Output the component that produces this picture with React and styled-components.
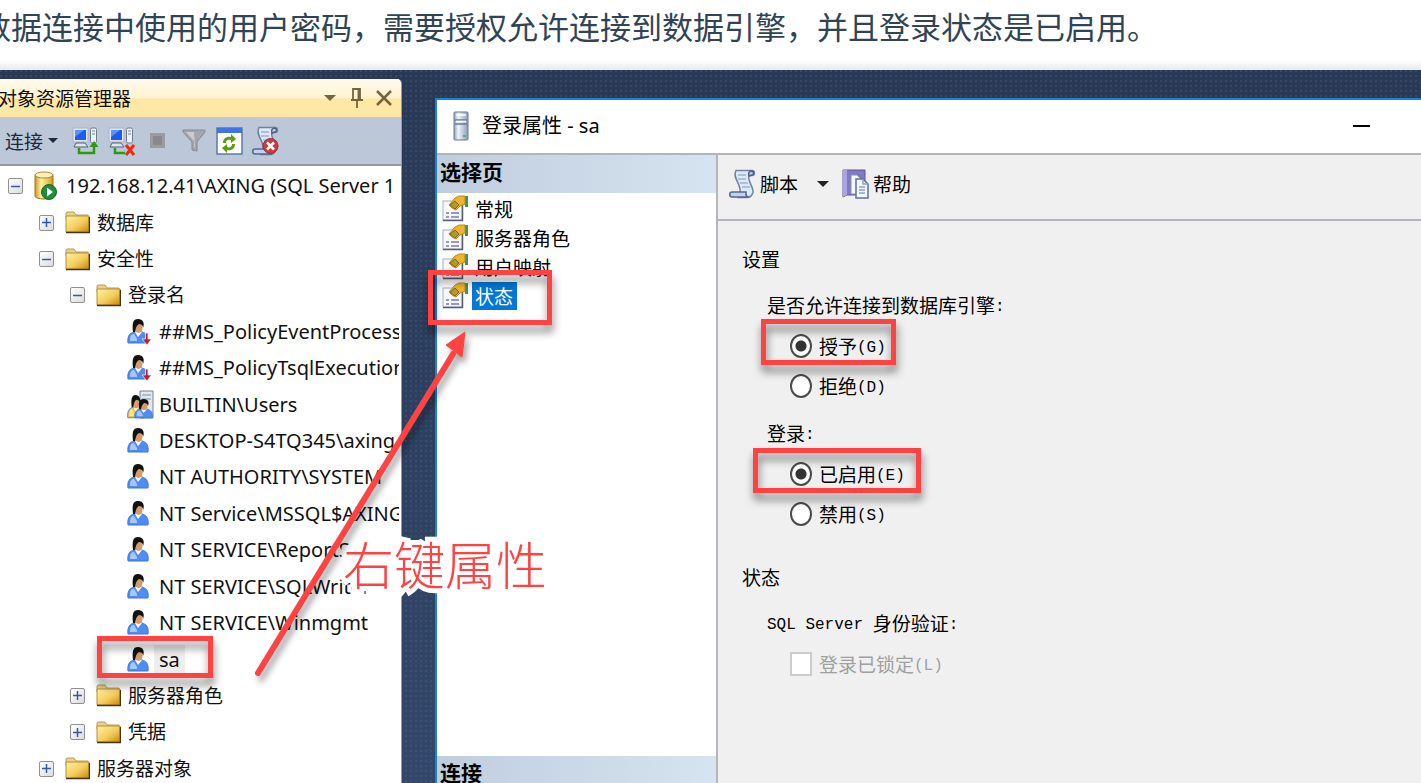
import React from 'react';
import styled, { createGlobalStyle } from 'styled-components';

const Global = createGlobalStyle`
  *, *::before, *::after { box-sizing: border-box; }
  body { margin: 0; background: #fff; overflow: hidden; }
  button { border: 0; padding: 0; background: none; font: inherit; color: inherit; }
  ul { list-style: none; margin: 0; padding: 0; }
  svg { display: block; flex: none; }
`;

const uiFont = '"Noto Sans", "Noto Sans CJK SC", sans-serif';
const cjkFont = '"Noto Sans CJK SC", sans-serif';

const Page = styled.div`
  height: 100vh;
  display: flex;
  flex-direction: column;
  overflow: hidden;
`;
const Intro = styled.p`
  margin: 0;
  height: 70px;
  flex: none;
  font: 31px/52px ${cjkFont};
  text-indent: -20px;
  color: #304455;
  white-space: nowrap;
  background: linear-gradient(#fff 60px, #e9eaec 70px);
`;
const Stage = styled.main`
  position: relative;
  flex: 1;
  min-height: 0;
  display: flex;
  gap: 33px;
  background:
    radial-gradient(circle at 1px 1px, rgba(90, 115, 160, 0.25) 1px, transparent 1px) 0 0 / 5px 5px,
    linear-gradient(#293955, #33476a);
  overflow: hidden;
`;

const Explorer = styled.section`
  width: 402px;
  flex: none;
  margin-top: 9px;
  display: flex;
  flex-direction: column;
  border-right: 1px solid #8e9bbc;
  border-radius: 0 5px 0 0;
  overflow: hidden;
  background: #fff;
  font: 20px/36px ${uiFont};
  color: #111;
`;
const ExplorerTitle = styled.header`
  height: 38px;
  display: flex;
  align-items: center;
  padding-right: 4px;
  background: linear-gradient(#fffaec 0, #fff3cf 50%, #ffe8a6 52%, #ffe8a6 100%);
`;
const PanelName = styled.h2`
  margin: 0 auto 0 -2px;
  font: 19px/38px ${cjkFont};
  color: #111;
`;
const TitleButton = styled.button`
  width: 27px;
  height: 26px;
  display: grid;
  place-items: center;
`;
const ExplorerTools = styled.div`
  height: 49px;
  flex: none;
  display: flex;
  align-items: center;
  gap: 9px;
  padding-left: 5px;
  background: #bcc7d8;
  border-bottom: 2px solid #8f98a6;
`;
const ConnectButton = styled.button`
  display: flex;
  align-items: center;
  gap: 5px;
  margin-right: 5px;
  font: 19px/28px ${cjkFont};
  color: #1b293e;
`;
const ToolButton = styled.button`
  width: 27px;
  height: 30px;
  display: grid;
  place-items: center;
`;
const Tree = styled.ul`
  height: 619px;
  flex: none;
  display: grid;
  grid-auto-rows: 1fr;
  margin: 2px 2px 0 0;
  overflow: hidden;
`;
const TreeRow = styled.li`
  display: flex;
  align-items: center;
  padding-left: ${p => 8 + p.$level * 31}px;
  white-space: nowrap;
`;
const Expander = styled.button`
  width: 15px;
  height: 16px;
  margin-right: 11px;
  flex: none;
  display: grid;
  place-items: center;
  border: 1px solid #919191;
  border-radius: 2px;
  background: linear-gradient(135deg, #fff, #dcdcdc);
  visibility: ${p => (p.$leaf ? 'hidden' : 'visible')};
`;
const TreeIcon = styled.span`
  width: 27px;
  flex: none;
`;
const TreeLabel = styled.span`
  font-size: ${p => (p.$cjk ? 19 : 20)}px;
  padding: 0 5px;
  line-height: 30px;
  background: ${p => (p.$marked ? '#eeeeee' : 'transparent')};
`;

const Dialog = styled.section`
  flex: 1;
  min-width: 0;
  margin-top: 28px;
  display: flex;
  flex-direction: column;
  border: solid #1883d7;
  border-width: 2px 0 0 2px;
  background: #fff;
  font: 19px/28px ${cjkFont};
  color: #000;
`;
const DialogTitle = styled.header`
  height: 55px;
  flex: none;
  display: flex;
  align-items: center;
  padding: 0 46px 2px 16px;
  gap: 13px;
  border-bottom: 2px solid #b4b4b8;
`;
const DialogName = styled.h1`
  flex: 1;
  margin: 0;
  font: 20px/28px ${uiFont};
`;
const DialogBody = styled.div`
  flex: 1;
  min-height: 0;
  display: flex;
`;
const Sidebar = styled.nav`
  width: 281px;
  flex: none;
  display: flex;
  flex-direction: column;
  border-right: 2px solid #b4b6bd;
`;
const SideHeading = styled.h2`
  margin: 0;
  padding-left: 3px;
  flex: none;
  height: ${p => (p.$cut ? 27 : 38)}px;
  font: bold 21px/32px ${cjkFont};
  overflow: hidden;
  background: linear-gradient(90deg, #bfcddd, #d6e4f1);
`;
const PageList = styled.ul`
  flex: 1;
  padding-top: 1px;
`;
const PageItem = styled.li`
  height: 29px;
`;
const PageButton = styled.button`
  height: 29px;
  display: flex;
  align-items: center;
  gap: 4px;
  padding-left: 5px;
`;
const PageLabel = styled.span`
  padding: 0 4px 0 3px;
  line-height: 28px;
  color: ${p => (p.$on ? '#fff' : '#000')};
  background: ${p => (p.$on ? '#0078d7' : 'transparent')};
`;
const Content = styled.div`
  flex: 1;
  min-width: 0;
  background: #f0f0f0;
`;
const ContentTools = styled.div`
  height: 66px;
  display: flex;
  align-items: center;
  padding: 0 0 6px 11px;
  border-bottom: 2px solid #b4b6bd;
`;
const ContentTool = styled.button`
  display: flex;
  align-items: center;
  gap: 4px;
`;
const MenuTool = styled.button`
  width: 44px;
  height: 30px;
  padding-left: 6px;
  display: grid;
  place-items: center;
`;
const Form = styled.form`
  padding: 19px 0 0 24px;
`;
const Section = styled.fieldset`
  border: 0;
  margin: 0 0 24px;
  padding: 0;
`;
const SectionName = styled.legend`
  padding: 0;
  line-height: 38px;
`;
const Group = styled.div`
  padding: 8px 0 0 25px;
`;
const GroupName = styled.div`
  height: 40px;
  line-height: 38px;
`;
const Choice = styled.label`
  display: flex;
  align-items: center;
  gap: 7px;
  height: 40px;
  padding-left: 23px;
  color: ${p => (p.$off ? '#a0a0a0' : '#000')};
`;
const Radio = styled.input.attrs({ type: 'radio' })`
  appearance: none;
  width: 22px;
  height: 24px;
  margin: 0;
  border: 2px solid #4a4a4a;
  border-radius: 50%;
  background: #fff;
  &:checked { background: radial-gradient(circle, #333 5px, #fff 6px); }
`;
const Tick = styled.input.attrs({ type: 'checkbox' })`
  appearance: none;
  width: 22px;
  height: 24px;
  margin: 0;
  border: 2px solid #ccc;
  background: #fff;
`;
const Latin = styled.span`
  font: 16px/20px "Liberation Mono", monospace;
  vertical-align: 2px;
`;

const Mark = styled.div`
  position: absolute;
  left: ${p => p.$x}px;
  top: ${p => p.$y}px;
  width: ${p => p.$w}px;
  height: ${p => p.$h}px;
  border: 5px solid #ff4343;
  filter: drop-shadow(1px 7px 4px rgba(0, 0, 0, 0.5));
  pointer-events: none;
`;
const Arrow = styled.svg`
  position: absolute;
  left: 240px;
  top: 250px;
  filter: drop-shadow(3px 6px 3px rgba(0, 0, 0, 0.35));
  pointer-events: none;
`;
const Note = styled.div`
  position: absolute;
  left: 343px;
  top: 460px;
  font: 300 51px/66px ${cjkFont};
  color: #ff4343;
  -webkit-text-stroke: 10px #fff;
  paint-order: stroke fill;
`;

const Caret = ({ w = 12, color = '#222' }) => (
  <svg width={w} height={w / 2} viewBox="0 0 12 6"><path d="M0 0h12L6 6z" fill={color} /></svg>
);
const Pin = () => (
  <svg width="14" height="22" viewBox="0 0 14 22" fill="none" stroke="#75633d" strokeWidth="1.800">
    <path d="M3 13V2h7v11M8.500 2v11M1 13h12M7 13v8" />
  </svg>
);
const Close = () => (
  <svg width="18" height="18" viewBox="0 0 18 18" stroke="#75633d" strokeWidth="2.500"><path d="M2 2l14 14M16 2L2 16" /></svg>
);
const Connect = ({ off }) => (
  <svg width="27" height="30" viewBox="0 0 27 30">
    <rect x="1" y="2" width="15" height="14" fill="#e2e6ee" stroke="#a9b3c4" />
    <rect x="3" y="4" width="11" height="10" fill="#1c5df0" />
    <path d="M3 4h9L3 11z" fill="#5a93ff" />
    <path d="M4 17h9l3 4H2z" fill="#dfe5ef" stroke="#53617c" />
    <rect x="18.500" y="2" width="6" height="15" rx="1.500" fill="#eef1f5" stroke="#6e7c92" />
    <path d="M20 5h3M20 8h3" stroke="#75839b" />
    {off ? (
      <g fill="none"><path d="M7 22v5h10" stroke="#2d9a12" strokeWidth="2.500" /><path d="M18 19l8 10M26 19l-8 10" stroke="#f22a12" strokeWidth="3" /></g>
    ) : (
      <g><path d="M7 22v5h15v-7" fill="none" stroke="#2d9a12" strokeWidth="2.500" /><path d="M17.500 21h9L22 15z" fill="#2d9a12" /></g>
    )}
  </svg>
);
const Stop = () => (
  <svg width="15" height="15" viewBox="0 0 15 15"><rect width="15" height="15" fill="#9a9c9f" /><rect x="3" y="3" width="9" height="9" fill="#87898c" /></svg>
);
const Filter = () => (
  <svg width="24" height="24" viewBox="0 0 24 24"><path d="M1 1h22v2l-8 10v9l-5-1v-8L1 3z" fill="#a3a7ad" stroke="#878b91" /><path d="M4 3h8l1 15h-1v-6z" fill="#c9ccd1" /></svg>
);
const Refresh = () => (
  <svg width="27" height="28" viewBox="0 0 27 28">
    <rect x="1" y="1" width="25" height="26" fill="#fff" stroke="#5778b4" strokeWidth="1.500" />
    <rect x="1" y="1" width="25" height="5" fill="#4174e0" />
    <path d="M7 16c0-5 4-7 8-6V7l5 5-5 4v-3c-3-1-5 0-5 3zM19 17c0 5-4 7-8 6v3l-5-5 5-4v3c3 1 5 0 5-3z" fill="#5b9e0e" />
  </svg>
);
const Scroll = ({ error }) => (
  <svg width="27" height="30" viewBox="0 0 27 30">
    <path d="M7 1.500h16c3 0 3.500 5 0 5h-3c-2 5 5 12 4 17-1 3-3 5-6 5H9l2-6C12 14 3 9 7 1.500z" fill="#dce8fb" stroke="#70809f" strokeWidth="1.500" />
    <path d="M20 7c-1-3 0-5 3-5 2 1 2 4 0 4z" fill="#b9cbed" stroke="#4e5f80" strokeWidth="1.500" />
    <path d="M3 23h14v2c0 2 1 3 3 3H3c-3 0-3-5 0-5z" fill="#c1d2f1" stroke="#56688c" strokeWidth="1.500" />
    <path d="M9 6h8M9 10h8M11 14h8M13 18h8" stroke="#9eb1d3" strokeWidth="1.500" />
    {error && <g><circle cx="18.500" cy="20" r="7.500" fill="#c83c42" stroke="#a3272d" /><path d="M15 16.500l7 7M22 16.500l-7 7" stroke="#fff" strokeWidth="2.500" /></g>}
  </svg>
);
const Help = () => (
  <svg width="27" height="30" viewBox="0 0 27 30">
    <path d="M1 1h22v25H5l-4 2z" fill="#8179c5" stroke="#5a53a0" />
    <path d="M1 1h4v25l-4 2z" fill="#aaa4df" />
    <path d="M9 6h6l4 4v15H9z" fill="#f5f8fd" stroke="#8494b3" />
    <path d="M14 10h7l5 5v14H14z" fill="#f3f7fd" stroke="#5f7299" strokeWidth="1.500" />
    <path d="M21 10v5h5M17 18h6M17 21h6M17 24h6" fill="none" stroke="#8ea0c0" strokeWidth="1.500" />
  </svg>
);
const Server = () => (
  <svg width="23" height="30" viewBox="0 0 23 30">
    <defs><linearGradient id="db" x1="0" x2="1"><stop offset="0" stopColor="#d39a18" /><stop offset=".35" stopColor="#fff1a6" /><stop offset="1" stopColor="#d79a17" /></linearGradient></defs>
    <path d="M1 4v21c0 4 18 4 18 0V4z" fill="url(#db)" stroke="#9a7420" />
    <ellipse cx="10" cy="4" rx="9" ry="3" fill="#fff1bd" stroke="#ad8737" />
    <circle cx="15" cy="21" r="7.500" fill="#218c3a" stroke="#16692a" /><path d="M13 16.500l6 4.500-6 4.500z" fill="#fff" />
  </svg>
);
const Folder = () => (
  <svg width="25" height="23" viewBox="0 0 25 23">
    <defs><linearGradient id="fo" x1="0" y1="0" x2="1" y2="1"><stop offset="0" stopColor="#fff1a8" /><stop offset=".55" stopColor="#f3cd5b" /><stop offset="1" stopColor="#c98709" /></linearGradient></defs>
    <path d="M1 5V2l1-1h7l2 3h12v4H1z" fill="#e6d28e" stroke="#b39c61" />
    <path d="M1 5h23v16H1z" fill="url(#fo)" stroke="#b98e2e" /><path d="M1 21.500h23.500V6" fill="none" stroke="#44351a" strokeWidth="1.500" />
  </svg>
);
const Person = ({ body = '#4f8df5' }) => (
  <g>
    <path d="M1 24c-1-7 2-10 6-11h8c4 1 7 4 6 11z" fill={body} stroke="#3f74dd" />
    <path d="M3 22c0-5 1-7 4-7l3 5v2z" fill="#a5c9ff" />
    <path d="M8 13l3 5 4-5z" fill="#fff" /><ellipse cx="11.500" cy="9" rx="4" ry="5" fill="#d69b68" />
    <path d="M6 13C5 4 6 0 11 0s7 4 5 9c0-3-2-4-4-4-2 1-3 3-4 8z" fill="#111" />
  </g>
);
const User = ({ down }) => (
  <svg width="25" height="26" viewBox="0 0 25 26"><Person />
    {down && <path d="M18.500 14h2.500v6h3.500L20 26l-5-6h3.500z" fill="#b92335" stroke="#fff" strokeWidth=".7" />}
  </svg>
);
const Users = () => (
  <svg width="27" height="29" viewBox="0 0 27 29">
    <path d="M13 1h13v27H13z" fill="#e3e8ef" stroke="#718096" /><path d="M15 5h9M15 9h9" stroke="#8190a6" />
    <g transform="translate(0 5) scale(.78 .95)"><Person body="#f2c139" /><path d="M3 22c0-5 1-7 4-7l3 5v2z" fill="#ffe38a" /></g>
    <g transform="translate(7 9) scale(.87 .78)"><Person /></g>
  </svg>
);
const Tower = () => (
  <svg width="16" height="30" viewBox="0 0 16 30">
    <defs><linearGradient id="tw" x1="0" x2="1"><stop offset="0" stopColor="#8fa0bb" /><stop offset=".3" stopColor="#f0f4f9" /><stop offset="1" stopColor="#8c9dba" /></linearGradient></defs>
    <rect x="1" y="1" width="14" height="28" rx="1" fill="url(#tw)" stroke="#667892" />
    <path d="M2 9h12M2 13h12" stroke="#667b99" strokeWidth="1.500" /><path d="M3 10.500h10M3 4h10" stroke="#fff" strokeWidth="1.500" /><rect x="10" y="24" width="3" height="2" fill="#49c13a" />
  </svg>
);
const Props = () => (
  <svg width="26" height="27" viewBox="0 0 26 27">
    <rect x="1" y="6" width="19" height="19" fill="#f6f8fc" stroke="#a5afbd" /><path d="M1 25.500h19.500V10" fill="none" stroke="#56606f" strokeWidth="1.500" />
    <path d="M4 18h3M9 18h8M4 22h3M9 22h8" stroke="#7179ba" strokeWidth="1.500" />
    <path d="M23 1h3v11h-3z" fill="#48924b" /><path d="M7 10l6-7 4-2h6v8l-5 2-4 4-4-2z" fill="#f0b42c" stroke="#b78a25" /><path d="M8 10l5 4 4-4-4-4z" fill="#b39a2a" stroke="#7d6817" />
  </svg>
);

const icons = { server: <Server />, folder: <Folder />, user: <User />, userDown: <User down />, users: <Users /> };
const tree = [
  [0, '-', 'server', '192.168.12.41\\AXING (SQL Server 1'],
  [1, '+', 'folder', '数据库'],
  [1, '-', 'folder', '安全性'],
  [2, '-', 'folder', '登录名'],
  [3, '', 'userDown', '##MS_PolicyEventProcess'],
  [3, '', 'userDown', '##MS_PolicyTsqlExecution'],
  [3, '', 'users', 'BUILTIN\\Users'],
  [3, '', 'user', 'DESKTOP-S4TQ345\\axing'],
  [3, '', 'user', 'NT AUTHORITY\\SYSTEM'],
  [3, '', 'user', 'NT Service\\MSSQL$AXING'],
  [3, '', 'user', 'NT SERVICE\\ReportS'],
  [3, '', 'user', 'NT SERVICE\\SQLWriter'],
  [3, '', 'user', 'NT SERVICE\\Winmgmt'],
  [3, '', 'user', 'sa'],
  [2, '+', 'folder', '服务器角色'],
  [2, '+', 'folder', '凭据'],
  [1, '+', 'folder', '服务器对象'],
];
const pages = ['常规', '服务器角色', '用户映射', '状态'];

export default function App() {
  return (
    <Page>
      <Global />
      <Intro>数据连接中使用的用户密码，需要授权允许连接到数据引擎，并且登录状态是已启用。</Intro>
      <Stage>
        <Explorer>
          <ExplorerTitle>
            <PanelName>对象资源管理器</PanelName>
            <TitleButton aria-label="菜单"><Caret color="#75633d" /></TitleButton>
            <TitleButton aria-label="固定"><Pin /></TitleButton>
            <TitleButton aria-label="关闭"><Close /></TitleButton>
          </ExplorerTitle>
          <ExplorerTools>
            <ConnectButton>连接<Caret w={10} color="#1b293e" /></ConnectButton>
            <ToolButton aria-label="连接服务器"><Connect /></ToolButton>
            <ToolButton aria-label="断开"><Connect off /></ToolButton>
            <ToolButton aria-label="停止"><Stop /></ToolButton>
            <ToolButton aria-label="筛选"><Filter /></ToolButton>
            <ToolButton aria-label="刷新"><Refresh /></ToolButton>
            <ToolButton aria-label="脚本错误"><Scroll error /></ToolButton>
          </ExplorerTools>
          <Tree>
            {tree.map(([level, state, icon, name]) => (
              <TreeRow key={name} $level={level}>
                <Expander $leaf={!state} aria-label={name}>
                  <svg width="9" height="9" viewBox="0 0 9 9" stroke="#3a57a5" strokeWidth="1.500">
                    <path d={state === '+' ? 'M0 4.500h9M4.500 0v9' : 'M0 4.500h9'} />
                  </svg>
                </Expander>
                <TreeIcon>{icons[icon]}</TreeIcon>
                <TreeLabel $cjk={icon === 'folder'} $marked={name === 'sa'}>{name}</TreeLabel>
              </TreeRow>
            ))}
          </Tree>
        </Explorer>

        <Dialog>
          <DialogTitle>
            <Tower />
            <DialogName>登录属性 - sa</DialogName>
            <TitleButton aria-label="最小化">
              <svg width="17" height="2" viewBox="0 0 17 2"><path d="M0 1h17" stroke="#000" strokeWidth="2" /></svg>
            </TitleButton>
          </DialogTitle>
          <DialogBody>
            <Sidebar>
              <SideHeading>选择页</SideHeading>
              <PageList>
                {pages.map(name => (
                  <PageItem key={name}>
                    <PageButton><Props /><PageLabel $on={name === '状态'}>{name}</PageLabel></PageButton>
                  </PageItem>
                ))}
              </PageList>
              <SideHeading $cut>连接</SideHeading>
            </Sidebar>
            <Content>
              <ContentTools>
                <ContentTool><Scroll />脚本</ContentTool>
                <MenuTool aria-label="脚本菜单"><Caret /></MenuTool>
                <ContentTool><Help />帮助</ContentTool>
              </ContentTools>
              <Form>
                <Section>
                  <SectionName>设置</SectionName>
                  <Group>
                    <GroupName>是否允许连接到数据库引擎<Latin>:</Latin></GroupName>
                    <Choice><Radio name="engine" defaultChecked /><span>授予<Latin>(G)</Latin></span></Choice>
                    <Choice><Radio name="engine" /><span>拒绝<Latin>(D)</Latin></span></Choice>
                  </Group>
                  <Group>
                    <GroupName>登录<Latin>:</Latin></GroupName>
                    <Choice><Radio name="login" defaultChecked /><span>已启用<Latin>(E)</Latin></span></Choice>
                    <Choice><Radio name="login" /><span>禁用<Latin>(S)</Latin></span></Choice>
                  </Group>
                </Section>
                <Section>
                  <SectionName>状态</SectionName>
                  <Group>
                    <GroupName><Latin>SQL Server </Latin>身份验证<Latin>:</Latin></GroupName>
                    <Choice $off><Tick disabled /><span>登录已锁定<Latin>(L)</Latin></span></Choice>
                  </Group>
                </Section>
              </Form>
            </Content>
          </DialogBody>
        </Dialog>

        <Mark $x={428} $y={200} $w={124} $h={55} />
        <Mark $x={761} $y={249} $w={135} $h={46} />
        <Mark $x={753} $y={378} $w={168} $h={45} />
        <Mark $x={97} $y={566} $w={116} $h={42} />
        <Note>右键属性</Note>
        <Arrow width="240" height="370" viewBox="0 0 240 370">
          <path d="M18 353L213 34" stroke="#ff4343" strokeWidth="6" strokeLinecap="round" />
          <path d="M225 12L222 37L206 25z" fill="#ff4343" stroke="#ff4343" />
        </Arrow>
      </Stage>
    </Page>
  );
}
